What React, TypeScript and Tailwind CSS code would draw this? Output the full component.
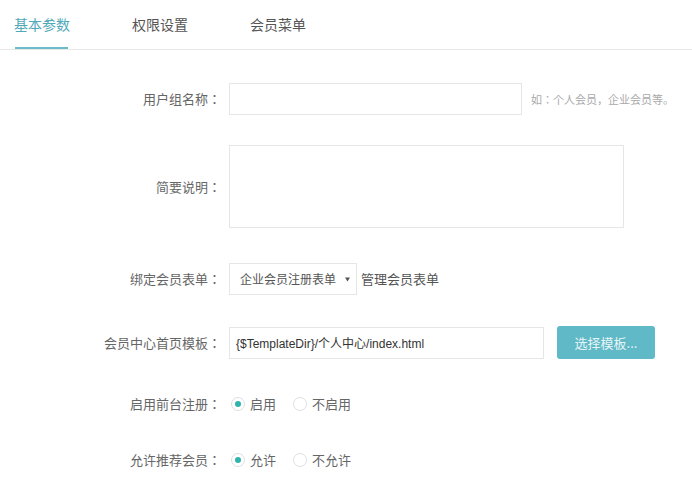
import { useState } from 'react';

const font = { fontFamily: '"Noto Sans CJK SC", "Liberation Sans", sans-serif' };
const latin = { fontFamily: '"Liberation Sans", "Noto Sans CJK SC", sans-serif' };
const centered = { fontFamily: '"Noto Sans CJK JP", "Noto Sans CJK SC", sans-serif' };

const tabs = ['基本参数', '权限设置', '会员菜单'];

function Label({ children }: { children: string }) {
  return (
    <div className="w-[221px] shrink-0 text-right text-[13px] text-[#666]">
      {children}
      <span style={centered}>：</span>
    </div>
  );
}

function Radio({ checked, label }: { checked?: boolean; label: string }) {
  return (
    <label className="flex items-center gap-[5px] text-[13px] text-[#666]">
      <span className="flex h-[14px] w-[14px] items-center justify-center rounded-full border border-[#dcdfe3] bg-white">
        {checked && <span className="h-[6px] w-[6px] rounded-full bg-[#2fb3ad]" />}
      </span>
      {label}
    </label>
  );
}

export default function App() {
  const [active, setActive] = useState(0);

  return (
    <div
      className="h-[487px] w-[692px] overflow-hidden bg-white [text-spacing-trim:space-all]"
      style={font}
    >
      <div className="flex h-[50px] border-b border-[#e8e8e8] pl-[14px]">
        {tabs.map((tab, i) => (
          <button
            key={tab}
            onClick={() => setActive(i)}
            className={`relative mr-[62px] h-[49px] text-[14px] ${
              i === active ? 'text-[#4fa9b8]' : 'text-[#555]'
            }`}
          >
            {tab}
            {i === active && (
              <span className="absolute bottom-0 left-[1px] right-[2px] h-[2px] bg-[#6bbcc8]" />
            )}
          </button>
        ))}
      </div>

      <div className="flex flex-col pt-[33px]">
        <div className="flex items-center gap-2">
          <Label>用户组名称</Label>
          <input className="h-[32px] w-[293px] border border-[#e4e6e8] px-2 text-[13px] outline-none" />
          <span className="ml-[1px] whitespace-nowrap text-[11px] text-[#aaa]" style={centered}>
            如：个人会员，企业会员等。
          </span>
        </div>

        <div className="mt-[30px] flex items-center gap-2">
          <Label>简要说明</Label>
          <textarea className="h-[83px] w-[395px] resize-none border border-[#e4e6e8] px-2 text-[13px] outline-none" />
        </div>

        <div className="mt-[35px] flex items-center gap-2">
          <Label>绑定会员表单</Label>
          <div className="flex h-[32px] w-[128px] items-center justify-between whitespace-nowrap border border-[#e4e6e8] pl-[10px] pr-[6px] text-[12px] text-[#555]">
            <span>企业会员注册表单</span>
            <svg width="5" height="5" viewBox="0 0 5 5">
              <path d="M0 0.5H5L2.5 4.5Z" fill="#555" />
            </svg>
          </div>
          <span className="-ml-[4px] text-[13px] text-[#555]">管理会员表单</span>
        </div>

        <div className="mt-[31px] flex items-center gap-2">
          <Label>会员中心首页模板</Label>
          <input
            defaultValue="{$TemplateDir}/个人中心/index.html"
            style={latin}
            className="h-[32px] w-[315px] border border-[#e4e6e8] px-[6px] text-[12px] text-[#333] outline-none"
          />
          <button className="ml-[5px] h-[33px] w-[98px] rounded-[3px] bg-[#5fb9c6] text-[13px] text-[#e6f4f6]">
            选择模板...
          </button>
        </div>

        <div className="mt-[29px] flex h-[32px] items-center gap-2">
          <Label>启用前台注册</Label>
          <div className="ml-[2px] flex items-center gap-[17px]">
            <Radio checked label="启用" />
            <Radio label="不启用" />
          </div>
        </div>

        <div className="mt-[24px] flex h-[32px] items-center gap-2">
          <Label>允许推荐会员</Label>
          <div className="ml-[2px] flex items-center gap-[17px]">
            <Radio checked label="允许" />
            <Radio label="不允许" />
          </div>
        </div>
      </div>
    </div>
  );
}
